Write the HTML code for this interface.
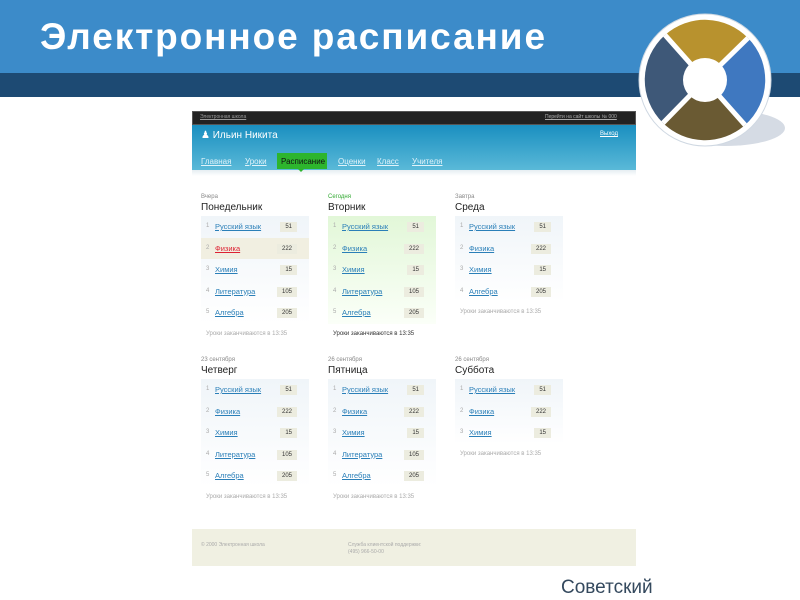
<!DOCTYPE html>
<html><head><meta charset="utf-8"><style>
*{margin:0;padding:0;box-sizing:border-box}
body{width:800px;height:600px;overflow:hidden;background:#fff;font-family:"Liberation Sans",sans-serif;position:relative}
.a{position:absolute}
.col{position:absolute;width:108px}
.lbl{font-size:6px;color:#888;height:10px;line-height:10px;margin-top:2px}
.ttl{font-size:10px;color:#222;height:14px;line-height:12px}
.box{background:linear-gradient(#f0f5f9,#fff);margin-top:0}
.box.g{background:linear-gradient(#e2f7d8,#fbfff8)}
.r{height:21.5px;position:relative;font-size:7.5px;line-height:21.5px}
.r .n{position:absolute;left:5px;color:#aaa;font-size:6px}
.r .s{position:absolute;left:14px;color:#2a7fb8;text-decoration:underline}
.r .c{position:absolute;right:12px;top:6px;height:10px;line-height:10px;background:#ececdf;color:#333;font-size:6px;padding:0 5px}
.r.h{background:#f1efe1}
.r.h .s{color:#d23}
.ft{font-size:6px;color:#aaa;height:20px;line-height:20px;padding-left:5px}
.nv{position:absolute;top:157px;font-size:8px;color:#e0f3fa;text-decoration:underline;white-space:nowrap}
</style></head><body>
<div class="a" style="left:0;top:0;width:800px;height:73px;background:#3c8bc9"></div>
<div class="a" style="left:0;top:73px;width:800px;height:24px;background:#1d4a73"></div>
<div class="a" style="left:40px;top:16px;font-size:37px;font-weight:bold;color:#fff;letter-spacing:1.9px;white-space:nowrap">Электронное расписание</div>
<svg class="a" style="left:630px;top:10px" width="170" height="140" viewBox="0 0 170 140">
<ellipse cx="95" cy="118" rx="60" ry="18" fill="#d5dbe4"/>
<circle cx="75" cy="70" r="66" fill="#fff" stroke="#cfd8e2" stroke-width="1"/>
<path d="M75 70 L35 25 A60 60 0 0 1 118 28 Z" fill="#b8922e"/>
<path d="M75 70 L118 28 A60 60 0 0 1 115 115 Z" fill="#3f78c0"/>
<path d="M75 70 L115 115 A60 60 0 0 1 33 113 Z" fill="#6a5a33"/>
<path d="M75 70 L33 113 A60 60 0 0 1 35 25 Z" fill="#3e5878"/>
<path d="M35 25 L75 70 L118 28 M115 115 L75 70 L33 113" stroke="#fff" stroke-width="5" fill="none"/>
<circle cx="75" cy="70" r="22" fill="#fff"/>
</svg>
<!-- screenshot -->
<div class="a" style="left:192px;top:111px;width:444px;height:14px;background:#222;border:1px solid #555"></div>
<div class="a" style="left:200px;top:114px;font-size:5px;color:#999;text-decoration:underline">Электронная школа</div>
<div class="a" style="left:545px;top:114px;font-size:5px;color:#aaa;text-decoration:underline">Перейти на сайт школы № 000</div>
<div class="a" style="left:192px;top:125px;width:444px;height:45px;background:linear-gradient(#1a8fc0,#5ab9d8)"></div>
<div class="a" style="left:192px;top:170px;width:444px;height:6px;background:linear-gradient(#e6eef2,#fff)"></div>
<div class="a" style="left:201px;top:130px;font-size:10px;color:#fff">&#9823; Ильин Никита</div>
<div class="a" style="left:600px;top:131px;font-size:6px;color:#fff;text-decoration:underline">Выход</div>
<div class="a" style="left:277px;top:153px;width:50px;height:16px;background:#2db52d"></div>
<div class="a" style="left:298px;top:169px;width:0;height:0;border-left:3px solid transparent;border-right:3px solid transparent;border-top:3px solid #2db52d"></div>
<div class="nv" style="left:201px">Главная</div>
<div class="nv" style="left:245px">Уроки</div>
<div class="nv" style="left:281px;color:#111;text-decoration:none">Расписание</div>
<div class="nv" style="left:338px">Оценки</div>
<div class="nv" style="left:377px">Класс</div>
<div class="nv" style="left:412px">Учителя</div>

<div class="col" style="left:201px;top:190px"><div class="lbl">Вчера</div><div class="ttl">Понедельник</div><div class="box">
<div class="r"><span class="n">1</span><span class="s">Русский язык</span><span class="c">51</span></div>
<div class="r h"><span class="n">2</span><span class="s">Физика</span><span class="c">222</span></div>
<div class="r"><span class="n">3</span><span class="s">Химия</span><span class="c">15</span></div>
<div class="r"><span class="n">4</span><span class="s">Литература</span><span class="c">105</span></div>
<div class="r"><span class="n">5</span><span class="s">Алгебра</span><span class="c">205</span></div></div>
<div class="ft">Уроки заканчиваются в 13:35</div></div>

<div class="col" style="left:328px;top:190px"><div class="lbl" style="color:#3a3">Сегодня</div><div class="ttl">Вторник</div><div class="box g">
<div class="r"><span class="n">1</span><span class="s">Русский язык</span><span class="c">51</span></div>
<div class="r"><span class="n">2</span><span class="s">Физика</span><span class="c">222</span></div>
<div class="r"><span class="n">3</span><span class="s">Химия</span><span class="c">15</span></div>
<div class="r"><span class="n">4</span><span class="s">Литература</span><span class="c">105</span></div>
<div class="r"><span class="n">5</span><span class="s">Алгебра</span><span class="c">205</span></div></div>
<div class="ft" style="color:#333">Уроки заканчиваются в 13:35</div></div>

<div class="col" style="left:455px;top:190px"><div class="lbl">Завтра</div><div class="ttl">Среда</div><div class="box">
<div class="r"><span class="n">1</span><span class="s">Русский язык</span><span class="c">51</span></div>
<div class="r"><span class="n">2</span><span class="s">Физика</span><span class="c">222</span></div>
<div class="r"><span class="n">3</span><span class="s">Химия</span><span class="c">15</span></div>
<div class="r"><span class="n">4</span><span class="s">Алгебра</span><span class="c">205</span></div></div>
<div class="ft">Уроки заканчиваются в 13:35</div></div>

<div class="col" style="left:201px;top:353px"><div class="lbl">23 сентября</div><div class="ttl">Четверг</div><div class="box">
<div class="r"><span class="n">1</span><span class="s">Русский язык</span><span class="c">51</span></div>
<div class="r"><span class="n">2</span><span class="s">Физика</span><span class="c">222</span></div>
<div class="r"><span class="n">3</span><span class="s">Химия</span><span class="c">15</span></div>
<div class="r"><span class="n">4</span><span class="s">Литература</span><span class="c">105</span></div>
<div class="r"><span class="n">5</span><span class="s">Алгебра</span><span class="c">205</span></div></div>
<div class="ft">Уроки заканчиваются в 13:35</div></div>

<div class="col" style="left:328px;top:353px"><div class="lbl">26 сентября</div><div class="ttl">Пятница</div><div class="box">
<div class="r"><span class="n">1</span><span class="s">Русский язык</span><span class="c">51</span></div>
<div class="r"><span class="n">2</span><span class="s">Физика</span><span class="c">222</span></div>
<div class="r"><span class="n">3</span><span class="s">Химия</span><span class="c">15</span></div>
<div class="r"><span class="n">4</span><span class="s">Литература</span><span class="c">105</span></div>
<div class="r"><span class="n">5</span><span class="s">Алгебра</span><span class="c">205</span></div></div>
<div class="ft">Уроки заканчиваются в 13:35</div></div>

<div class="col" style="left:455px;top:353px"><div class="lbl">26 сентября</div><div class="ttl">Суббота</div><div class="box">
<div class="r"><span class="n">1</span><span class="s">Русский язык</span><span class="c">51</span></div>
<div class="r"><span class="n">2</span><span class="s">Физика</span><span class="c">222</span></div>
<div class="r"><span class="n">3</span><span class="s">Химия</span><span class="c">15</span></div></div>
<div class="ft">Уроки заканчиваются в 13:35</div></div>

<div class="a" style="left:192px;top:529px;width:444px;height:37px;background:#f0f0e2"></div>
<div class="a" style="left:201px;top:542px;font-size:5px;color:#aaa">© 2000 Электронная школа</div>
<div class="a" style="left:348px;top:542px;font-size:5px;color:#aaa;line-height:7px">Служба клиентской поддержки:<br>(495) 966-50-00</div>
<div class="a" style="left:561px;top:577px;font-size:19px;color:#34495e">Советский</div>
</body></html>
